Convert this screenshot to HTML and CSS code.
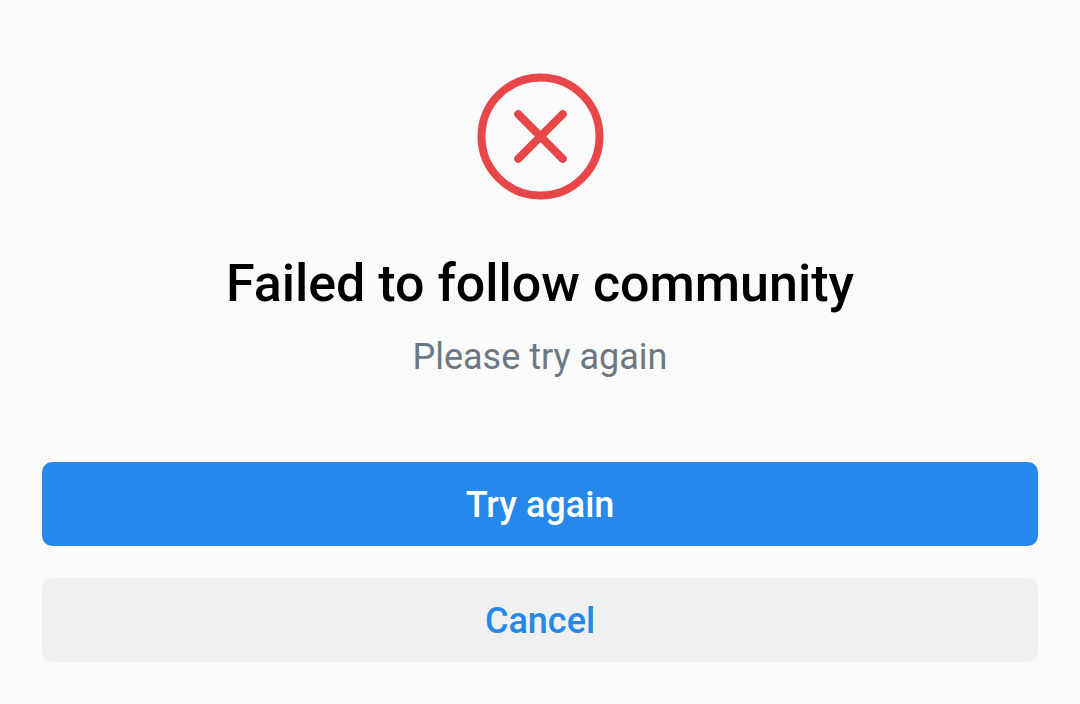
FILE: index.html
```html
<!DOCTYPE html>
<html lang="en">
<head>
<meta charset="utf-8">
<meta name="viewport" content="width=device-width, initial-scale=1">
<title>Failed to follow community</title>
<link rel="stylesheet" href="styles.css">
</head>
<body>
<main class="dialog">
  <svg class="icon" viewBox="0 0 128 128" aria-hidden="true">
    <circle cx="64.500" cy="64.500" r="59"/>
    <path d="M42.200 42.200L86.800 86.800M86.800 42.200L42.200 86.800"/>
  </svg>
  <h1 class="title">Failed to follow community</h1>
  <p class="message">Please try again</p>
  <div class="actions">
    <button class="button button-primary" type="button">Try again</button>
    <button class="button button-secondary" type="button">Cancel</button>
  </div>
</main>
</body>
</html>
```
FILE: styles.css
```css
body {
  margin: 0;
  background: #fafafa;
  font-family: Roboto, sans-serif;
}

.dialog {
  display: flex;
  flex-direction: column;
  align-items: center;
  padding: 72px 42px 42px;
  text-align: center;
}

.icon {
  width: 128px;
  height: 128px;
  fill: none;
  stroke: #e84749;
  stroke-width: 8;
  stroke-linecap: round;
}

.title {
  margin: 52px 0 0;
  color: #000;
  font-size: 52px;
  font-weight: 500;
  line-height: 64px;
}

.message {
  margin: 17px 0 0;
  color: #6d7885;
  font-size: 36px;
  line-height: 48px;
}

.actions {
  display: flex;
  flex-direction: column;
  align-self: stretch;
  gap: 32px;
  margin-top: 81px;
}

.button {
  padding: 19px 24px 17px;
  border: 0;
  border-radius: 10px;
  font-family: inherit;
  font-size: 36px;
  font-weight: 500;
  line-height: 48px;
  cursor: pointer;
}

.button-primary {
  background: #2688eb;
  color: #fff;
}

.button-secondary {
  background: #f0f0f0;
  color: #2688eb;
}
```
